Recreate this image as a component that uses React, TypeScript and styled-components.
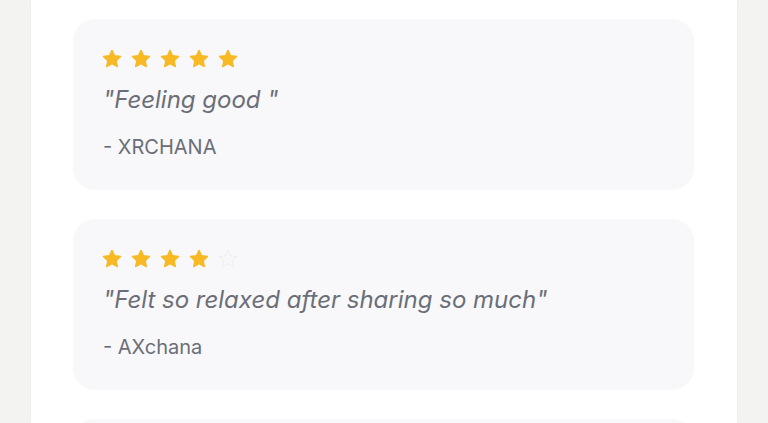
import React from "react";
import styled, { createGlobalStyle } from "styled-components";

const Global = createGlobalStyle`
  html, body { margin: 0; padding: 0; background: #f3f3f1; }
  body { font-family: Inter, "Noto Sans", sans-serif; overflow: hidden; }
`;

const Page = styled.div`
  display: flex;
  justify-content: center;
  height: 423px;
  padding-left: 31px;
  padding-right: 31px;
  box-sizing: border-box;
`;

const Panel = styled.main`
  flex: 1;
  background: #ffffff;
  box-shadow: 0 0 3px rgba(0, 0, 0, 0.06);
  padding: 19px 43px 0 42px;
  display: flex;
  flex-direction: column;
  gap: 29px;
  overflow: hidden;
`;

const Card = styled.article`
  background: #f8f8fa;
  border-radius: 22px;
  padding: 30px 30px 29px;
  display: flex;
  flex-direction: column;
  flex-shrink: 0;
  min-height: 60px;
`;

const Stars = styled.div`
  display: flex;
  gap: 9px;
  height: 20px;
  margin-left: -1px;
`;

const Quote = styled.p`
  margin: 14px 0 0;
  font-style: italic;
  font-size: 24px;
  line-height: 34px;
  color: #6b6e78;
  letter-spacing: 0;
`;

const Author = styled.p`
  margin: 16px 0 0;
  font-size: 20px;
  line-height: 28px;
  color: #6b6e78;
`;

const Star = ({ filled }: { filled: boolean }) => (
  <svg width="20" height="20" viewBox="0 0 24 24">
    <path
      d="M12 1.6l3.1 6.5 7.2.9-5.3 5 1.4 7.1L12 17.7l-6.4 3.4 1.4-7.1-5.3-5 7.2-.9z"
      fill={filled ? "#f7b924" : "none"}
      stroke={filled ? "#f7b924" : "#eeeef0"}
      strokeWidth={filled ? 1.6 : 1.2}
      strokeLinejoin="round"
    />
  </svg>
);

const reviews = [
  { rating: 5, text: "\"Feeling good \"", author: "- XRCHANA" },
  { rating: 4, text: "\"Felt so relaxed after sharing so much\"", author: "- AXchana" },
];

export default function App() {
  return (
    <>
      <Global />
      <Page>
        <Panel>
          {reviews.map((r, i) => (
            <Card key={i}>
              <Stars>
                {[0, 1, 2, 3, 4].map((s) => (
                  <Star key={s} filled={s < r.rating} />
                ))}
              </Stars>
              <Quote>{r.text}</Quote>
              <Author>{r.author}</Author>
            </Card>
          ))}
          <Card aria-hidden="true" />
        </Panel>
      </Page>
    </>
  );
}
